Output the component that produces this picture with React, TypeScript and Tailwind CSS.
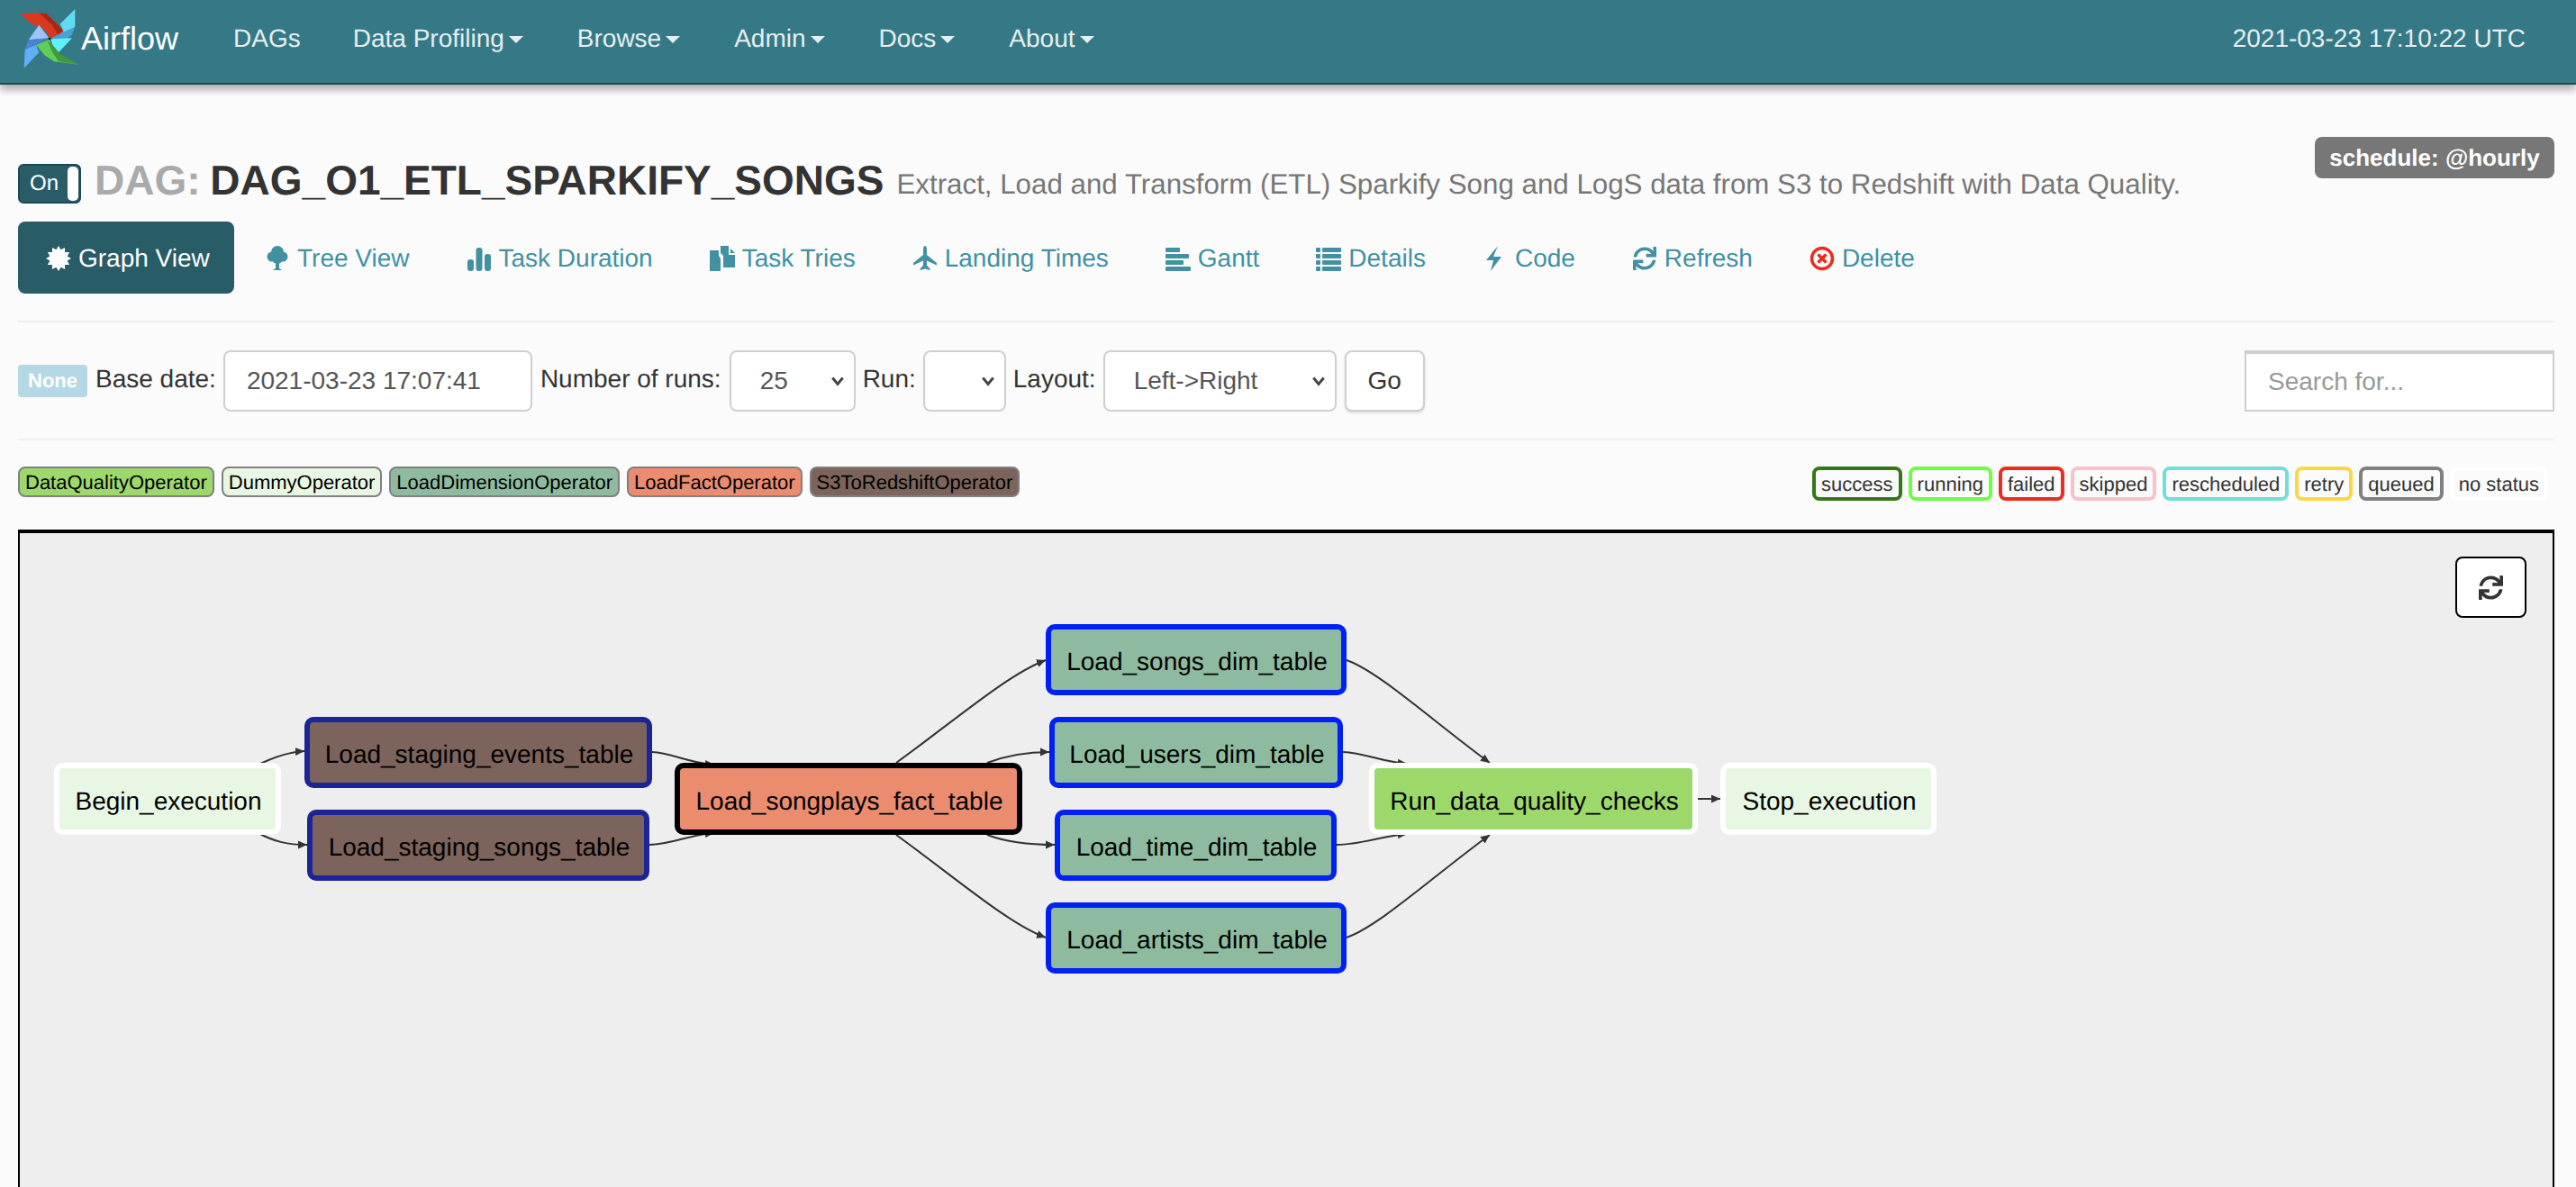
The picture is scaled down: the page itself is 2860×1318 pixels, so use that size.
import type { ReactNode } from "react";
import { FaSync } from "react-icons/fa";

const ICON_CLASS = "h-[28px] w-[28px] fill-[#4191a2]";

function Logo() {
  return (
    <svg viewBox="0 0 240 225" className="-mt-[2px] h-[75px] w-[80px] shrink-0">
      <polygon points="22,30 85,28 167,90 150,108 122,112 100,80 60,65" fill="#d8391f" />
      <polygon points="85,28 110,30 165,85 150,105 130,70" fill="#a52a14" />
      <polygon points="205,15 155,65 167,90 140,106 205,75" fill="#5fdcf2" />
      <polygon points="205,75 125,112 170,122 195,100" fill="#4a9fd0" />
      <polygon points="124,115 195,112 150,160 130,135" fill="#5ff0fb" />
      <polygon points="75,135 120,116 130,150 150,180 218,200 135,190 105,170" fill="#5fcf5a" />
      <polygon points="112,118 130,135 155,165 218,200 150,190 130,160" fill="#3f9a3c" />
      <polygon points="85,68 118,112 50,118" fill="#9cc4fb" />
      <polygon points="50,118 118,112 38,150" fill="#4a82d8" />
      <polygon points="38,150 120,115 75,135 85,160 35,212" fill="#60aef5" />
      <circle cx="120" cy="114" r="4" fill="#111" />
    </svg>
  );
}

function Certificate() {
  const points: string[] = [];
  for (let i = 0; i < 24; i++) {
    const radius = i % 2 === 0 ? 14 : 10;
    const angle = (i * Math.PI) / 12;
    points.push(`${14 + radius * Math.sin(angle)},${14 - radius * Math.cos(angle)}`);
  }
  return (
    <svg viewBox="0 0 28 28" className="h-[28px] w-[28px] fill-white">
      <polygon points={points.join(" ")} />
    </svg>
  );
}

function TreeIcon() {
  return (
    <svg viewBox="0 0 28 28" className={ICON_CLASS}>
      <circle cx="14" cy="7" r="7" />
      <circle cx="8" cy="12" r="5.5" />
      <circle cx="20" cy="12" r="5.5" />
      <circle cx="14" cy="14" r="6" />
      <polygon points="12,16 16,16 16,25 19,27 9,27 12,25" />
    </svg>
  );
}

function BarsIcon() {
  return (
    <svg viewBox="0 0 28 28" className={ICON_CLASS}>
      <rect x="1" y="15" width="7" height="13" rx="3" />
      <rect x="10.5" y="2" width="7" height="26" rx="3" />
      <rect x="20" y="9" width="7" height="19" rx="3" />
    </svg>
  );
}

function FilesIcon() {
  return (
    <svg viewBox="0 0 28 28" className={ICON_CLASS}>
      <polygon points="0,5 10,5 10,11 12,14 12,28 0,28" />
      <polygon points="12,0 21,0 21,10 28,10 28,24 15,24 15,11 12,8" />
      <polygon points="23,3 28,8 23,8" />
    </svg>
  );
}

function PlaneIcon() {
  return (
    <svg viewBox="0 0 28 28" className={ICON_CLASS}>
      <path d="M14 0c1.6 0 2 2.5 2 5v5l11 9v2.500l-11-5v5l3.500 4v1.500l-5.500-1.500-5.500 1.500v-1.500l3.500-4v-5l-11 5v-2.500l11-9v-5c0-2.500.4-5 2-5z" />
    </svg>
  );
}

function GanttIcon() {
  return (
    <svg viewBox="0 0 28 28" className={ICON_CLASS}>
      <rect x="0" y="2" width="16" height="5" rx="1" />
      <rect x="0" y="9" width="26" height="5" rx="1" />
      <rect x="0" y="16" width="20" height="5" rx="1" />
      <rect x="0" y="23" width="28" height="5" rx="1" />
    </svg>
  );
}

function ListIcon() {
  return (
    <svg viewBox="0 0 28 28" className={ICON_CLASS}>
      <rect x="0" y="2" width="5" height="5" rx="1" />
      <rect x="7" y="2" width="21" height="5" rx="1" />
      <rect x="0" y="9" width="5" height="5" rx="1" />
      <rect x="7" y="9" width="21" height="5" rx="1" />
      <rect x="0" y="16" width="5" height="5" rx="1" />
      <rect x="7" y="16" width="21" height="5" rx="1" />
      <rect x="0" y="23" width="5" height="5" rx="1" />
      <rect x="7" y="23" width="21" height="5" rx="1" />
    </svg>
  );
}

function BoltIcon() {
  return (
    <svg viewBox="0 0 28 28" className={ICON_CLASS}>
      <polygon points="17,0 12,12 21,12 9,28 12,16 4,16" />
    </svg>
  );
}

function DeleteIcon() {
  return (
    <svg viewBox="0 0 28 28" className="h-[28px] w-[28px]">
      <circle cx="14" cy="14" r="11.500" fill="none" stroke="#ec2c20" strokeWidth="3.500" />
      <path d="M9.500 9.500l9 9M18.500 9.500l-9 9" fill="none" stroke="#ec2c20" strokeWidth="3.500" />
    </svg>
  );
}

const tabs: { label: string; icon: ReactNode }[] = [
  { label: "Tree View", icon: <TreeIcon /> },
  { label: "Task Duration", icon: <BarsIcon /> },
  { label: "Task Tries", icon: <FilesIcon /> },
  { label: "Landing Times", icon: <PlaneIcon /> },
  { label: "Gantt", icon: <GanttIcon /> },
  { label: "Details", icon: <ListIcon /> },
  { label: "Code", icon: <BoltIcon /> },
  { label: "Refresh", icon: <FaSync className="h-[26px] w-[26px] fill-[#4191a2]" /> },
  { label: "Delete", icon: <DeleteIcon /> },
];

const operators = [
  { label: "DataQualityOperator", color: "bg-[#9dd86b]" },
  { label: "DummyOperator", color: "bg-[#e8f7e4]" },
  { label: "LoadDimensionOperator", color: "bg-[#8ebb9f]" },
  { label: "LoadFactOperator", color: "bg-[#ec8c6f]" },
  { label: "S3ToRedshiftOperator", color: "bg-[#7c635b]" },
];

const statuses = [
  { label: "success", color: "border-[#35761a]" },
  { label: "running", color: "border-[#6cff45]" },
  { label: "failed", color: "border-[#ec2c20]" },
  { label: "skipped", color: "border-[#f7c2cb]" },
  { label: "rescheduled", color: "border-[#72dfd5]" },
  { label: "retry", color: "border-[#fbd645]" },
  { label: "queued", color: "border-[#808080]" },
  { label: "no status", color: "border-white" },
];

const WHITE = "border-white";
const NAVY = "border-[#1b2596]";
const BLUE = "border-[#0021f5]";

// graph nodes, in page coordinates
const nodes = [
  { label: "Begin_execution", x: 60, y: 847, w: 252, h: 80, border: WHITE, fill: "bg-[#e8f7e4]" },
  { label: "Load_staging_events_table", x: 338, y: 796, w: 386, h: 79, border: NAVY, fill: "bg-[#7c635b]" },
  { label: "Load_staging_songs_table", x: 341, y: 899, w: 380, h: 79, border: NAVY, fill: "bg-[#7c635b]" },
  { label: "Load_songplays_fact_table", x: 749, y: 847, w: 386, h: 80, border: "border-black", fill: "bg-[#ec8c6f]" },
  { label: "Load_songs_dim_table", x: 1161, y: 693, w: 334, h: 79, border: BLUE, fill: "bg-[#8ebb9f]" },
  { label: "Load_users_dim_table", x: 1165, y: 796, w: 326, h: 79, border: BLUE, fill: "bg-[#8ebb9f]" },
  { label: "Load_time_dim_table", x: 1171, y: 899, w: 313, h: 79, border: BLUE, fill: "bg-[#8ebb9f]" },
  { label: "Load_artists_dim_table", x: 1161, y: 1002, w: 334, h: 79, border: BLUE, fill: "bg-[#8ebb9f]" },
  { label: "Run_data_quality_checks", x: 1520, y: 847, w: 365, h: 80, border: WHITE, fill: "bg-[#9dd86b]" },
  { label: "Stop_execution", x: 1910, y: 847, w: 240, h: 80, border: WHITE, fill: "bg-[#e8f7e4]" },
];

const edges = [
  "M285 850C305 840 320 835 338 834",
  "M285 924C305 935 320 938 341 938",
  "M724 835C745 836 768 848 793 849",
  "M721 938C745 938 768 926 793 925",
  "M995 847C1060 800 1120 748 1161 733",
  "M995 927C1060 974 1120 1026 1161 1041",
  "M1096 847C1120 838 1140 835 1165 835",
  "M1096 927C1120 936 1145 938 1171 938",
  "M1495 733C1530 745 1590 800 1654 847",
  "M1495 1041C1530 1029 1590 974 1654 927",
  "M1491 835C1515 836 1535 846 1562 848",
  "M1484 938C1510 938 1535 928 1562 926",
  "M1885 887L1910 887",
];

function Select({ value, width }: { value: string; width: string }) {
  return (
    <div className={`relative h-[68px] ${width}`}>
      <select className="h-full w-full appearance-none rounded-[8px] border-2 border-[#cfcfcf] bg-white pl-[32px] text-[28px] text-[#555]">
        <option>{value}</option>
      </select>
      <svg viewBox="0 0 14 14" className="pointer-events-none absolute right-[12px] top-[26px] h-[16px] w-[16px]">
        <path d="M2 4l5 6 5-6" fill="none" stroke="#444" strokeWidth="2.600" />
      </svg>
    </div>
  );
}

export default function App() {
  return (
    <div className="h-[1318px] overflow-hidden bg-[#fbfbfb] font-['Liberation_Sans',Arial,sans-serif] text-[28px] text-[#333] [text-rendering:geometricPrecision]">
      <nav className="flex h-[94px] items-center border-b-2 border-[#1c4a54] bg-[#357986] pb-[6px] pl-[15px] pr-[56px] text-[#e6eeef] shadow-[0_6px_8px_rgba(0,0,0,0.3)]">
        <Logo />
        <span className="-ml-[5px] mr-[31px] text-[36px] text-white">Airflow</span>
        <span className="pl-[30px] pr-[28px]">DAGs</span>
        {["Data Profiling", "Browse", "Admin", "Docs", "About"].map((item) => (
          <span key={item} className="flex items-center gap-[5px] px-[30px]">
            {item}
            <span className="mt-[2px] h-0 w-0 border-x-[8px] border-t-[8px] border-x-transparent border-t-[#e6eeef]" />
          </span>
        ))}
        <span className="ml-auto">2021-03-23 17:10:22 UTC</span>
      </nav>

      <main className="px-[20px] pr-[24px] pt-[58px]">
        <div className="flex h-[94px] items-start justify-between">
          <div className="mt-[28px] flex items-center">
            <div className="flex h-[44px] w-[70px] items-center justify-between rounded-[6px] border-2 border-[#1c4a54] bg-[#285d68] pl-[11px] pr-[1px] text-[24px] text-white">
              On
              <span className="h-[38px] w-[12px] rounded-[5px] bg-white" />
            </div>
            <h1 className="-mt-[8px] ml-[15px] text-[46px] font-bold leading-none text-[#aaa]">
              DAG: <span className="-ml-[2px] text-[#333]">DAG_O1_ETL_SPARKIFY_SONGS</span>
            </h1>
            <span className="ml-[14px] mt-[2px] text-[31.3px] text-[#777]">
              Extract, Load and Transform (ETL) Sparkify Song and LogS data from S3 to Redshift with Data Quality.
            </span>
          </div>
          <span className="flex h-[46px] w-[266px] items-center justify-center rounded-[8px] bg-[#777] text-[26px] font-bold text-white">
            schedule: @hourly
          </span>
        </div>

        <div className="flex h-[80px] items-center">
          <a className="mr-[1px] flex h-full w-[240px] items-center gap-[8px] rounded-[8px] bg-[#285c67] pl-[31px] pt-[2px] text-white">
            <Certificate />
            Graph View
          </a>
          {tabs.map((tab) => (
            <a key={tab.label} className="ml-[3px] flex items-center gap-[8px] px-[30px] pt-[2px] text-[#4191a2]">
              <span className="flex h-[28px] w-[28px] items-center justify-center">{tab.icon}</span>
              {tab.label}
            </a>
          ))}
        </div>

        <hr className="mt-[30px] border-t-2 border-[#eee]" />

        <div className="flex h-[129px] items-center">
          <span className="flex h-[36px] w-[77px] items-center justify-center rounded-[4px] bg-[#b5d8e6] text-[22px] font-bold text-white">
            None
          </span>
          <span className="ml-[9px] mr-[8px] -mt-[4px]">Base date:</span>
          <input
            readOnly
            value="2021-03-23 17:07:41"
            className="h-[68px] w-[343px] rounded-[8px] border-2 border-[#cfcfcf] bg-white pl-[24px] text-[28px] text-[#555]"
          />
          <span className="ml-[9px] mr-[9px] -mt-[4px]">Number of runs:</span>
          <Select value="25" width="w-[140px]" />
          <span className="ml-[8px] mr-[8px] -mt-[4px]">Run:</span>
          <Select value="" width="w-[92px]" />
          <span className="ml-[8px] mr-[8px] -mt-[4px]">Layout:</span>
          <Select value="Left->Right" width="w-[259px]" />
          <button className="ml-[9px] h-[68px] w-[89px] rounded-[8px] border-2 border-[#cfcfcf] bg-white text-[#333] shadow-[0_2px_3px_rgba(0,0,0,0.12)]">
            Go
          </button>
          <input
            readOnly
            placeholder="Search for..."
            className="ml-auto h-[68px] w-[344px] border-2 border-t-4 border-[#cfcfcf] bg-white pl-[24px] text-[28px] placeholder:text-[#999]"
          />
        </div>

        <hr className="border-t-2 border-[#eee]" />

        <div className="flex h-[99px] items-start justify-between pt-[29px] text-[22px]">
          <div className="flex gap-[8px]">
            {operators.map((op) => (
              <span
                key={op.label}
                className={`flex h-[34px] items-center rounded-[8px] border-2 border-[#808080] px-[6px] text-black ${op.color}`}
              >
                {op.label}
              </span>
            ))}
          </div>
          <div className="mr-[7px] flex gap-[7px]">
            {statuses.map((status) => (
              <span
                key={status.label}
                className={`flex h-[38px] items-center rounded-[8px] border-4 px-[6px] text-[#333] ${status.color}`}
              >
                {status.label}
              </span>
            ))}
          </div>
        </div>

        <div className="relative h-[800px] border-2 border-t-4 border-black bg-[#eee] text-black">
          <svg viewBox="22 592 2812 800" className="absolute inset-0 h-[800px] w-[2812px]">
            <defs>
              <marker id="arrow" markerUnits="userSpaceOnUse" markerWidth="12" markerHeight="12" refX="10" refY="6" orient="auto">
                <path d="M0 1.500L10 6L0 10.500z" fill="#333" />
              </marker>
            </defs>
            {edges.map((d) => (
              <path key={d} d={d} fill="none" stroke="#333" strokeWidth="2" markerEnd="url(#arrow)" />
            ))}
          </svg>
          {nodes.map((node) => (
            <div
              key={node.label}
              className={`absolute flex items-center justify-center rounded-[10px] border-[6px] pl-[2px] pt-[5px] ${node.border} ${node.fill}`}
              style={{ left: node.x - 22, top: node.y - 592, width: node.w, height: node.h }}
            >
              {node.label}
            </div>
          ))}
          <button className="absolute right-[29px] top-[26px] flex h-[68px] w-[79px] items-center justify-center rounded-[8px] border-2 border-black bg-white">
            <FaSync className="h-[27px] w-[27px] fill-[#333]" />
          </button>
        </div>
      </main>
    </div>
  );
}
